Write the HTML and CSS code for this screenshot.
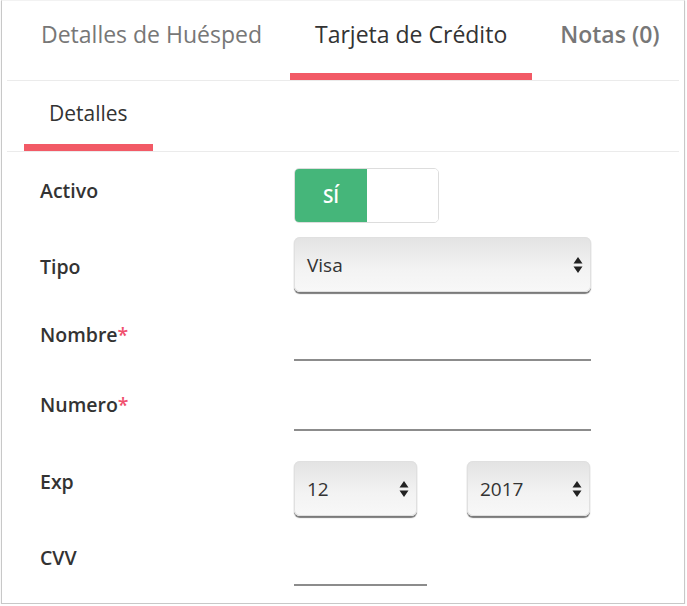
FILE: index.html
```html
<!DOCTYPE html>
<html lang="es">
<head>
<meta charset="utf-8">
<link rel="stylesheet" href="styles.css">
</head>
<body>
<div class="panel">
  <nav class="tabs">
    <div class="tab">Detalles de Huésped</div>
    <div class="tab active">Tarjeta de Crédito</div>
    <div class="tab">Notas (0)</div>
  </nav>
  <nav class="subtabs">
    <div class="subtab active">Detalles</div>
  </nav>
  <form class="form">
    <div class="row r-activo">
      <label class="lbl">Activo</label>
      <div class="toggle"><span class="toggle-on">SÍ</span><span class="toggle-off"></span></div>
    </div>
    <div class="row r-tipo">
      <label class="lbl">Tipo</label>
      <div class="select wide"><span>Visa</span><svg class="arrows" viewBox="0 0 10 20" width="10" height="20"><path d="M5 2 L9.5 8.5 H0.5 Z M5 18 L9.5 11.5 H0.5 Z" fill="#222"/></svg></div>
    </div>
    <div class="row r-text">
      <label class="lbl">Nombre<span class="req">*</span></label>
      <div class="line wide"></div>
    </div>
    <div class="row r-text">
      <label class="lbl">Numero<span class="req">*</span></label>
      <div class="line wide"></div>
    </div>
    <div class="row r-exp">
      <label class="lbl">Exp</label>
      <div class="exp">
        <div class="select small"><span>12</span><svg class="arrows" viewBox="0 0 10 20" width="10" height="20"><path d="M5 2 L9.5 8.5 H0.5 Z M5 18 L9.5 11.5 H0.5 Z" fill="#222"/></svg></div>
        <div class="select small"><span>2017</span><svg class="arrows" viewBox="0 0 10 20" width="10" height="20"><path d="M5 2 L9.5 8.5 H0.5 Z M5 18 L9.5 11.5 H0.5 Z" fill="#222"/></svg></div>
      </div>
    </div>
    <div class="row r-cvv">
      <label class="lbl">CVV</label>
      <div class="line short"></div>
    </div>
  </form>
</div>
</body>
</html>
```
FILE: styles.css
```css
* { box-sizing: border-box; }
html, body { margin: 0; padding: 0; background: #fff; }
body { font-family: "Open Sans", "Noto Sans", sans-serif; color: #333; }

.panel {
  margin-left: 1px;
  width: 684px;
  height: 604px;
  border: 1px solid #c8c8c8;
  border-top-color: #f2f2f2;
  box-shadow: 0 1px 1px rgba(0,0,0,0.15);
  padding: 0 5px;
  overflow: hidden;
}

.tabs {
  display: flex;
  gap: 3px;
  padding-left: 9px;
  border-bottom: 1px solid #ebebeb;
  height: 80px;
}
.tab {
  flex-shrink: 0;
  white-space: nowrap;
  padding: 14px 25px 0;
  font-size: 23px;
  line-height: 38px;
  color: #777;
  height: 79px;
}
.tab.active {
  color: #333;
  border-bottom: 7px solid #f25a66;
}
.tab:last-child { font-weight: 600; }

.subtabs {
  display: flex;
  padding-left: 17px;
  border-bottom: 1px solid #ebebeb;
  height: 71px;
}
.subtab {
  white-space: nowrap;
  padding: 16px 25px 0;
  font-size: 21px;
  line-height: 32px;
  color: #333;
  height: 70px;
}
.subtab.active { border-bottom: 7px solid #f25a66; }

.form {
  display: flex;
  flex-direction: column;
  padding: 16px 0 0 33px;
}
.row {
  display: grid;
  grid-template-columns: 254px auto;
  align-items: start;
}
.lbl {
  font-size: 19.5px;
  font-weight: 600;
  color: #333;
  line-height: 28px;
}
.req { color: #f0506e; }

.r-activo { height: 69px; }
.r-activo .lbl { padding-top: 9px; }
.toggle {
  display: flex;
  width: 145px;
  height: 55px;
  border: 1px solid #ddd;
  border-radius: 5px;
  overflow: hidden;
}
.toggle-on {
  width: 72px;
  background: #45b67a;
  color: #fff;
  font-size: 19px;
  font-weight: 600;
  display: flex;
  align-items: center;
  justify-content: center;
}
.toggle-off { flex: 1; background: #fff; }

.r-tipo { height: 84px; }
.r-tipo .lbl { padding-top: 16px; }

.select {
  display: flex;
  align-items: center;
  justify-content: space-between;
  height: 55px;
  padding: 0 8px 0 13px;
  border-radius: 6px;
  background: linear-gradient(#e3e3e3, #f3f3f3 60%, #f8f8f8);
  box-shadow: 0 1.5px 1px #7a7a7a, inset 0 0 0 1px #e0e0e0;
  font-size: 19px;
  color: #333;
}
.select .arrows { width: 10px; height: 20px; }
.select.wide { width: 297px; }
.select.small { width: 123px; }

.line { border-bottom: 2px solid #8c8c8c; }
.line.wide { width: 297px; height: 40px; }
.line.short { width: 133px; height: 42px; }

.r-text { height: 70px; }

.r-exp { height: 83px; }
.r-exp .lbl { padding-top: 7px; }
.exp { display: flex; gap: 50px; }
```
